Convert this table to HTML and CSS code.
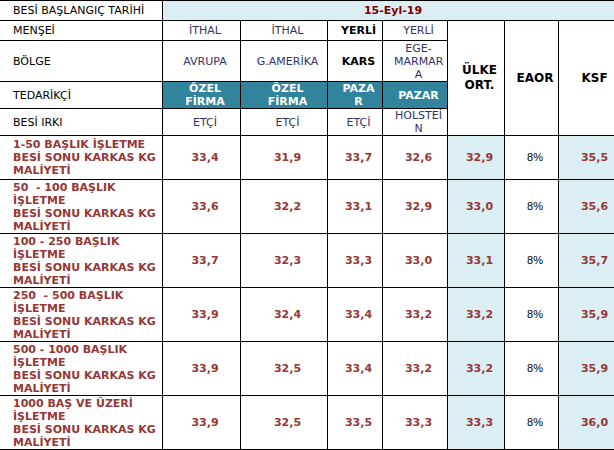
FILE: index.html
```html
<!DOCTYPE html>
<html lang="tr">
<head>
<meta charset="utf-8">
<title>Besi Sonu Karkas Maliyeti</title>
<link rel="stylesheet" href="styles.css">
</head>
<body>
<table class="sheet">
  <colgroup>
    <col class="c-label">
    <col class="c-avr">
    <col class="c-gam">
    <col class="c-kars">
    <col class="c-ege">
    <col class="c-ort">
    <col class="c-eaor">
    <col class="c-ksf">
  </colgroup>
  <tr class="r-date">
    <td class="lbl">BESİ BAŞLANGIÇ TARİHİ</td>
    <td class="date" colspan="7">15-Eyl-19</td>
  </tr>
  <tr class="r-one">
    <td class="lbl">MENŞEİ</td>
    <td class="hd">İTHAL</td>
    <td class="hd">İTHAL</td>
    <td class="hd strong">YERLİ</td>
    <td class="hd">YERLİ</td>
    <td class="big" rowspan="4">ÜLKE ORT.</td>
    <td class="big" rowspan="4">EAOR</td>
    <td class="big" rowspan="4">KSF</td>
  </tr>
  <tr class="r-three">
    <td class="lbl">BÖLGE</td>
    <td class="hd">AVRUPA</td>
    <td class="hd">G.AMERİKA</td>
    <td class="hd strong">KARS</td>
    <td class="hd">EGE-<br>MARMAR<br>A</td>
  </tr>
  <tr class="r-two">
    <td class="lbl">TEDARİKÇİ</td>
    <td class="teal">ÖZEL<br>FİRMA</td>
    <td class="teal">ÖZEL<br>FİRMA</td>
    <td class="teal">PAZA<br>R</td>
    <td class="teal">PAZAR</td>
  </tr>
  <tr class="r-two">
    <td class="lbl">BESİ IRKI</td>
    <td class="hd">ETÇİ</td>
    <td class="hd">ETÇİ</td>
    <td class="hd">ETÇİ</td>
    <td class="hd">HOLSTEİ<br>N</td>
  </tr>
  <tr class="r-d3">
    <td class="dl">1-50 BAŞLIK İŞLETME<br>BESİ SONU KARKAS KG<br>MALİYETİ</td>
    <td class="num">33,4</td><td class="num">31,9</td><td class="num">33,7</td><td class="num">32,6</td>
    <td class="num blue">32,9</td><td class="pct">8%</td><td class="num blue">35,5</td>
  </tr>
  <tr class="r-d4">
    <td class="dl">50&nbsp; - 100 BAŞLIK<br>İŞLETME<br>BESİ SONU KARKAS KG<br>MALİYETİ</td>
    <td class="num">33,6</td><td class="num">32,2</td><td class="num">33,1</td><td class="num">32,9</td>
    <td class="num blue">33,0</td><td class="pct">8%</td><td class="num blue">35,6</td>
  </tr>
  <tr class="r-d4">
    <td class="dl">100 - 250 BAŞLIK<br>İŞLETME<br>BESİ SONU KARKAS KG<br>MALİYETİ</td>
    <td class="num">33,7</td><td class="num">32,3</td><td class="num">33,3</td><td class="num">33,0</td>
    <td class="num blue">33,1</td><td class="pct">8%</td><td class="num blue">35,7</td>
  </tr>
  <tr class="r-d4">
    <td class="dl">250&nbsp; - 500 BAŞLIK<br>İŞLETME<br>BESİ SONU KARKAS KG<br>MALİYETİ</td>
    <td class="num">33,9</td><td class="num">32,4</td><td class="num">33,4</td><td class="num">33,2</td>
    <td class="num blue">33,2</td><td class="pct">8%</td><td class="num blue">35,9</td>
  </tr>
  <tr class="r-d4">
    <td class="dl">500 - 1000 BAŞLIK<br>İŞLETME<br>BESİ SONU KARKAS KG<br>MALİYETİ</td>
    <td class="num">33,9</td><td class="num">32,5</td><td class="num">33,4</td><td class="num">33,2</td>
    <td class="num blue">33,2</td><td class="pct">8%</td><td class="num blue">35,9</td>
  </tr>
  <tr class="r-d4">
    <td class="dl">1000 BAŞ VE ÜZERİ<br>İŞLETME<br>BESİ SONU KARKAS KG<br>MALİYETİ</td>
    <td class="num">33,9</td><td class="num">32,5</td><td class="num">33,5</td><td class="num">33,3</td>
    <td class="num blue">33,3</td><td class="pct">8%</td><td class="num blue">36,0</td>
  </tr>
</table>
</body>
</html>
```

FILE: styles.css
```css
html, body {
  margin: 0;
  padding: 0;
  overflow: hidden;
  background: #ffffff;
}

.sheet {
  margin-left: -1px;
  border-collapse: collapse;
  table-layout: fixed;
  width: 624px;
  font-family: "DejaVu Sans", Verdana, sans-serif;
  font-size: 11px;
  line-height: 13px;
  color: #000000;
}

.c-label { width: 163px; }
.c-avr { width: 78px; }
.c-gam { width: 87px; }
.c-kars { width: 55px; }
.c-ege { width: 65px; }
.c-ort { width: 57px; }
.c-eaor { width: 54px; }
.c-ksf { width: 65px; }

.sheet td {
  border: 1px solid #000000;
  padding: 0 4px 0 11px;
  text-align: center;
  vertical-align: middle;
  overflow: hidden;
}

.r-date td { height: 19px; }
.r-one td { height: 19px; }
.r-three td { height: 40px; }
.r-two td { height: 26px; }
.r-d3 td { height: 43px; }
.r-d4 td { height: 53px; }

.sheet td.lbl {
  text-align: left;
  padding: 0 0 0 13px;
  color: #000000;
}

.sheet td.date {
  background: #daeef3;
  color: #800000;
  font-weight: bold;
  padding: 0;
}

.hd {
  color: #333366;
}

.hd.strong {
  color: #000000;
  font-weight: bold;
}

.teal {
  background: #31849b;
  color: #ffffff;
  font-weight: bold;
}

.big {
  font-size: 12px;
  line-height: 15px;
  font-weight: bold;
}

.sheet td.dl {
  text-align: left;
  padding: 0 0 0 13px;
  color: #953735;
  font-weight: bold;
  white-space: nowrap;
}

.num {
  color: #953735;
  font-weight: bold;
}

.blue {
  background: #daeef3;
}

.pct {
  font-family: "Liberation Sans", Arial, sans-serif;
  font-size: 11px;
}
```
